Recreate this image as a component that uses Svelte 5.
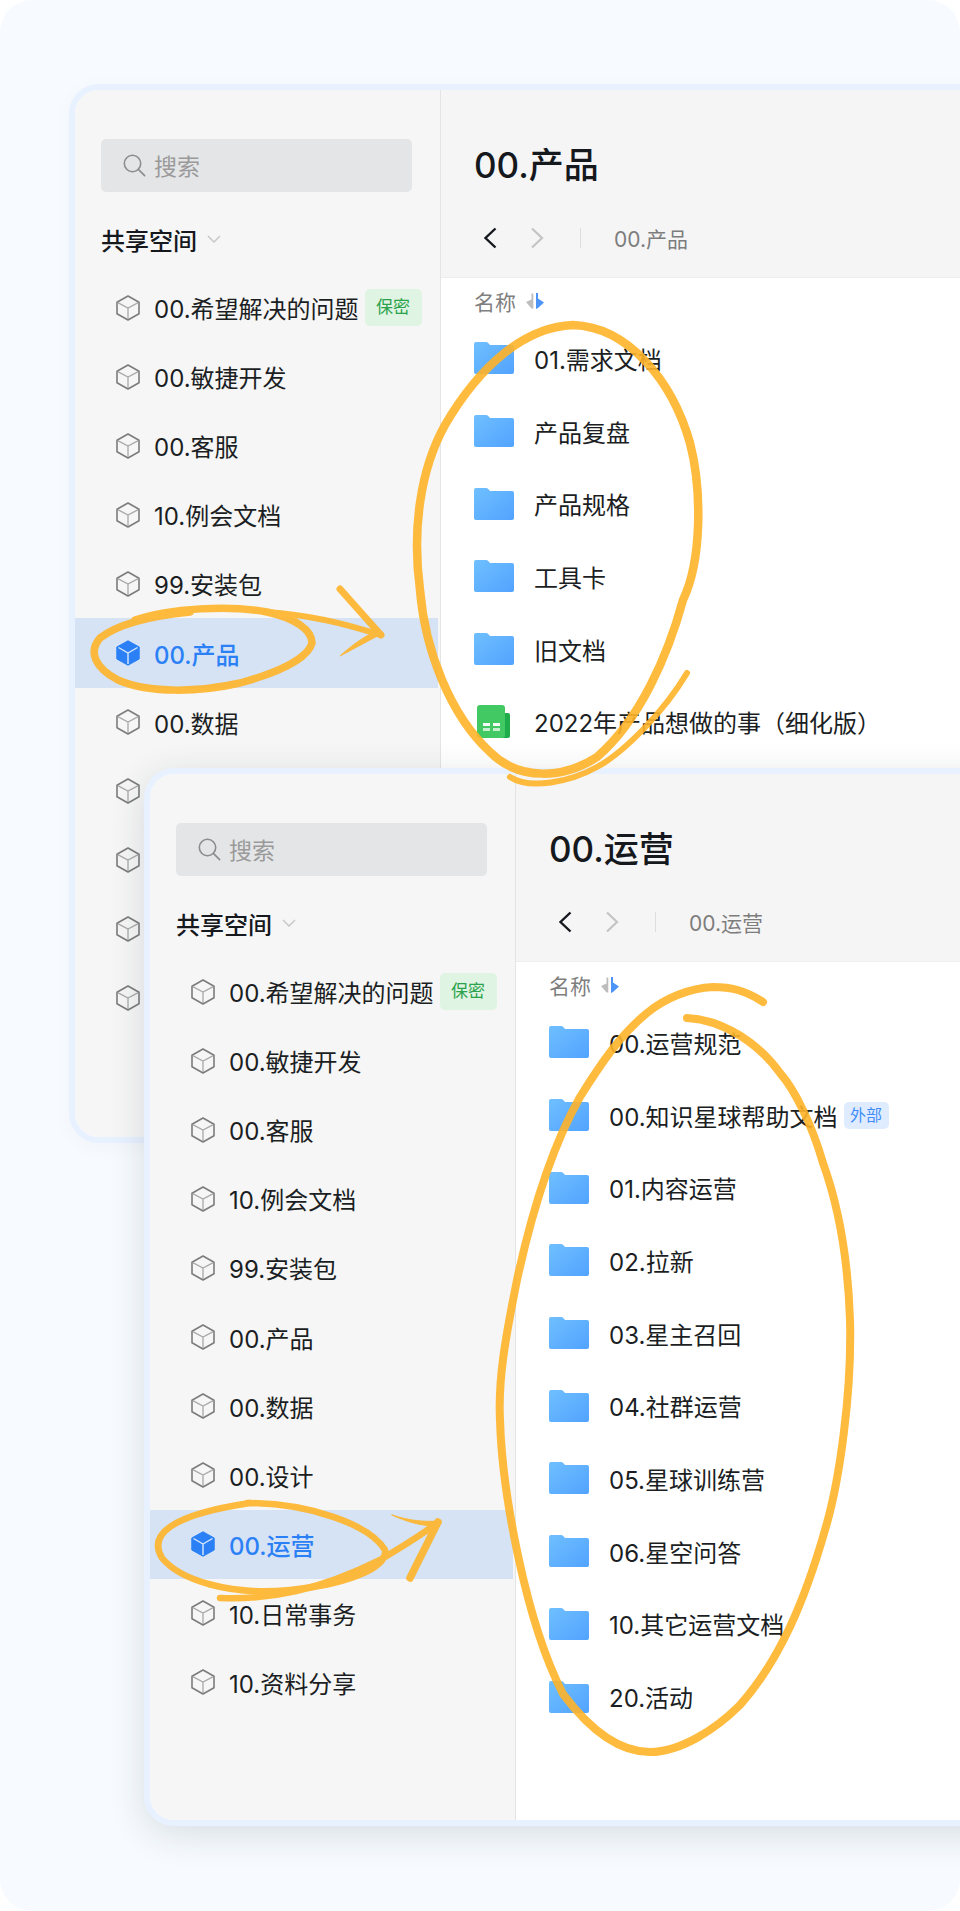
<script>
  const nav = ["00.希望解决的问题", "00.敏捷开发", "00.客服", "10.例会文档", "99.安装包", "00.产品", "00.数据", "00.设计", "00.运营", "10.日常事务", "10.资料分享"];

  const cards = [
    {
      cls: "back",
      title: "00.产品",
      files: [
        { name: "01.需求文档" },
        { name: "产品复盘" },
        { name: "产品规格" },
        { name: "工具卡" },
        { name: "旧文档" },
        { name: "2022年产品想做的事（细化版）", sheet: true }
      ]
    },
    {
      cls: "front",
      title: "00.运营",
      files: [
        { name: "00.运营规范" },
        { name: "00.知识星球帮助文档", tag: "外部" },
        { name: "01.内容运营" },
        { name: "02.拉新" },
        { name: "03.星主召回" },
        { name: "04.社群运营" },
        { name: "05.星球训练营" },
        { name: "06.星空问答" },
        { name: "10.其它运营文档" },
        { name: "20.活动" }
      ]
    }
  ];
</script>

{#snippet cube(active)}
  <svg class="cube" viewBox="0 0 24 26" width="24" height="26">
    {#if active}
      <path d="M12 .8 23.200 7v12L12 25.200.8 19V7Z" fill="#2b80f6" stroke="#2b80f6" stroke-linejoin="round" />
      <path d="M2.500 7.500 12 13l9.500-5.500M12 13v11" fill="none" stroke="#dbe8fb" stroke-width="1.400" />
    {:else}
      <path d="M12 1 23 7.200v11.600L12 25 1 18.800V7.200Z" fill="none" stroke="#7c7c7c" stroke-width="1.600" stroke-linejoin="round" />
      <path d="M1.800 7.600 12 13l10.200-5.400M12 13v11" fill="none" stroke="#a8a8a8" stroke-width="1.300" />
    {/if}
  </svg>
{/snippet}

{#snippet folder()}
  <svg class="ficon" viewBox="0 0 40 32" width="40" height="32">
    <defs>
      <linearGradient id="fg" x1="0" y1="0" x2="1" y2="1">
        <stop offset="0" stop-color="#6fbfff" />
        <stop offset="1" stop-color="#52a3ff" />
      </linearGradient>
    </defs>
    <path d="M2 0h10c.8 0 1.400.3 2 .8L16 3h22a2 2 0 0 1 2 2v25a2 2 0 0 1-2 2H2a2 2 0 0 1-2-2V2a2 2 0 0 1 2-2Z" fill="url(#fg)" />
  </svg>
{/snippet}

{#snippet sheet()}
  <svg class="ficon" viewBox="0 0 40 34" width="40" height="34">
    <path d="M29 8h5a2 2 0 0 1 2 2v21a2 2 0 0 1-2 2h-6Z" fill="#1fac4b" />
    <rect x="3" y="0" width="28" height="33" rx="3" fill="#42c963" />
    <path d="M9 18h7v3H9ZM19 18h7v3h-7Z" fill="#fff" opacity=".95" />
    <path d="M9 23h7v3H9ZM19 23h7v3h-7Z" fill="#fff" opacity=".7" />
  </svg>
{/snippet}

{#snippet win(card)}
  <section class="win {card.cls}">
    <aside class="side">
      <div class="search">
        <svg viewBox="0 0 24 24" width="24" height="24" fill="none" stroke="#8c8c8c" stroke-width="1.600" stroke-linecap="round">
          <circle cx="10.500" cy="10.500" r="8.200" />
          <path d="m16.600 16.600 6 6" />
        </svg>
        <span>搜索</span>
      </div>
      <div class="group">
        共享空间
        <svg viewBox="0 0 14 8" width="14" height="8" fill="none" stroke="#c8c8c8" stroke-width="1.500"><path d="m1 1 6 6 6-6" /></svg>
      </div>
      <ul class="nav">
        {#each nav as item}
          <li class:on={item === card.title}>
            {@render cube(item === card.title)}
            <span>{item}</span>
            {#if item === "00.希望解决的问题"}<em class="secret">保密</em>{/if}
          </li>
        {/each}
      </ul>
    </aside>
    <div class="main">
      <header>
        <h1>{card.title}</h1>
        <div class="crumbs">
          <svg viewBox="0 0 14 22" width="14" height="22" fill="none" stroke="#15181d" stroke-width="2.400"><path d="M12.500 1.500 2.500 11l10 9.500" /></svg>
          <svg class="next" viewBox="0 0 14 22" width="14" height="22" fill="none" stroke="#c4c4c4" stroke-width="2.200"><path d="m2 1.500 10 9.500-10 9.500" /></svg>
          <i></i>
          <span>{card.title}</span>
        </div>
      </header>
      <div class="list">
        <div class="th">
          名称
          <svg viewBox="0 0 18 18" width="18" height="18">
            <path d="M5.500 1.500h1.800v15H5.500L0 10l5.500-2.500Z" fill="#bdbdbd" />
            <path d="M10 1h2v5.500l6 4-6 5.500-2 1Z" fill="#4d94f8" />
          </svg>
        </div>
        {#each card.files as f}
          <div class="row">
            {#if f.sheet}{@render sheet()}{:else}{@render folder()}{/if}
            <span>{f.name}</span>
            {#if f.tag}<em class="ext">{f.tag}</em>{/if}
          </div>
        {/each}
      </div>
    </div>
  </section>
{/snippet}

<div class="page">
  {#each cards as card}
    {@render win(card)}
  {/each}

  <svg class="ink" viewBox="0 0 960 1911" width="960" height="1911" fill="none" stroke="#ffb429" stroke-width="8" stroke-linecap="round" stroke-linejoin="round">
    <path d="M573 325C628 327 672 380 690 443 702 490 702 560 683 600 668 655 640 720 597 757 565 778 520 782 490 752 450 715 425 650 420 590 412 530 420 470 445 425 480 365 525 327 573 325Z" stroke-width="8.500" />
    <path d="M510 777C530 790 570 782 597 767 625 752 665 710 687 673" stroke-width="6" />
    <path d="M135 620C170 608 230 605 267 612 295 618 312 630 312 643 308 658 280 672 240 683 200 692 150 694 118 680 95 668 88 652 100 638 118 624 150 616 190 612" stroke-width="7.500" />
    <path d="M267 612C310 615 350 625 380 635" stroke-width="6" />
    <path d="M340 589 381 635" stroke-width="7" />
    <path d="M383 633 340 656C352 645 365 636 378 630Z" fill="#ffb429" stroke-width="1" />
    <path d="M247 1503C310 1503 370 1525 385 1550 388 1570 340 1585 290 1590 230 1596 180 1580 162 1558 148 1535 170 1515 250 1503" stroke-width="6.500" />
    <path d="M220 1598C270 1600 320 1590 380 1560 400 1548 425 1533 438 1522" stroke-width="6.500" />
    <path d="M392 1515C410 1521 425 1522 438 1521L432 1526C418 1525 405 1521 392 1515Z" fill="#ffb429" stroke-width="1" />
    <path d="M438 1522 410 1578" stroke-width="7.500" />
    <path d="M763 1002C745 990 730 987 713 987 690 988 665 998 647 1013 620 1035 600 1065 580 1097 550 1150 530 1220 517 1280 505 1340 498 1380 500 1420 502 1490 525 1620 563 1694 590 1730 620 1752 650 1752 680 1752 715 1730 740 1705 780 1660 805 1600 825 1530 840 1480 852 1390 850 1320 848 1260 840 1210 823 1163 812 1125 795 1090 780 1073 760 1045 725 1020 687 1018" />
  </svg>
</div>

<style>
  :global(body) {
    margin: 0;
    background: #fff;
    font-family: Inter, "Noto Sans CJK SC", sans-serif;
  }
  .page {
    position: relative;
    width: 960px;
    height: 1911px;
    overflow: hidden;
    background: #f7fbff;
    border-radius: 32px;
  }
  .win {
    position: absolute;
    display: flex;
    width: 1100px;
    box-sizing: border-box;
    border: 6px solid #e8f1ff;
    border-radius: 30px;
    background: #fff;
    overflow: hidden;
  }
  .back {
    left: 69px;
    top: 84px;
    height: 1059px;
    box-shadow: 0 4px 20px rgba(30, 40, 60, 0.03);
  }
  .front {
    left: 144px;
    top: 768px;
    height: 1058px;
    box-shadow: 0 8px 36px rgba(30, 40, 60, 0.14);
  }
  .side {
    width: 366px;
    flex: none;
    box-sizing: border-box;
    padding: 49px 0 0;
    background: #f6f6f6;
    border-right: 1px solid #e4e4e4;
  }
  .search {
    display: flex;
    align-items: center;
    gap: 8px;
    width: 311px;
    height: 53px;
    margin-left: 26px;
    padding: 0 0 2px 21px;
    box-sizing: border-box;
    border-radius: 5px;
    background: #e4e5e7;
    color: #9a9a9a;
    font-size: 23px;
  }
  .group {
    display: flex;
    align-items: center;
    gap: 10px;
    margin: 29px 0 0 26px;
    height: 36px;
    color: #15181d;
    font-size: 24px;
    font-weight: 500;
  }
  .nav {
    list-style: none;
    margin: 16px 0 0;
    padding: 0;
  }
  .nav li {
    display: flex;
    align-items: center;
    height: 69.1px;
    margin-right: 2px;
    padding-left: 41px;
    color: #1b1e23;
    font-size: 24px;
  }
  .nav li.on {
    background: #d5e3f5;
    color: #2b80f6;
    font-weight: 500;
  }
  .cube {
    flex: none;
    margin-right: 14px;
  }
  em {
    font-style: normal;
    border-radius: 5px;
  }
  .secret {
    margin-left: 6px;
    padding: 0 11.5px;
    line-height: 37px;
    background: #dff4e2;
    color: #2ba24c;
    font-size: 17px;
  }
  .main {
    flex: 1;
    display: flex;
    flex-direction: column;
  }
  header {
    height: 188px;
    flex: none;
    box-sizing: border-box;
    padding: 50px 0 0 33px;
    background: #f5f5f5;
    border-bottom: 1px solid #eee;
  }
  h1 {
    margin: 0;
    height: 50px;
    color: #15181d;
    font-size: 35px;
    line-height: 50px;
    font-weight: 500;
  }
  .crumbs {
    display: flex;
    align-items: center;
    margin-top: 34px;
    height: 28px;
    padding-left: 9px;
    color: #7d7d7d;
    font-size: 21px;
  }
  .next {
    margin-left: 33px;
  }
  .crumbs i {
    width: 1px;
    height: 20px;
    margin: 0 33px 0 36px;
    background: #ddd;
  }
  .list {
    padding-left: 33px;
    color: #1b1e23;
  }
  .th {
    display: flex;
    align-items: center;
    gap: 10px;
    height: 42px;
    padding-top: 2px;
    color: #7f7f7f;
    font-size: 21px;
  }
  .row {
    display: flex;
    align-items: center;
    height: 72.7px;
    font-size: 24px;
  }
  .ficon {
    flex: none;
    margin-right: 20px;
  }
  .ext {
    margin-left: 6px;
    padding: 0 6.5px;
    line-height: 27px;
    background: #dfebff;
    color: #3f8ef7;
    font-size: 16px;
  }
  .ink {
    position: absolute;
    left: 0;
    top: 0;
    opacity: 0.9;
    pointer-events: none;
  }
</style>
